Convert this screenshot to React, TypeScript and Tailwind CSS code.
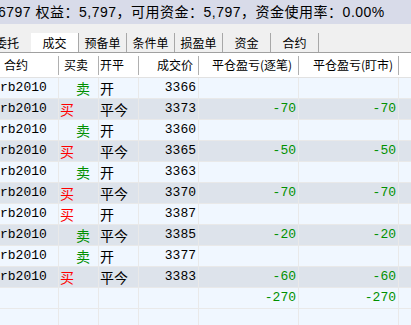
import React from 'react';

type Trade = {
  side: '买' | '卖';
  action: '开' | '平今';
  price: number;
  pnl?: number;
};

const trades: Trade[] = [
  { side: '卖', action: '开', price: 3366 },
  { side: '买', action: '平今', price: 3373, pnl: -70 },
  { side: '卖', action: '开', price: 3360 },
  { side: '买', action: '平今', price: 3365, pnl: -50 },
  { side: '卖', action: '开', price: 3363 },
  { side: '买', action: '平今', price: 3370, pnl: -70 },
  { side: '买', action: '开', price: 3387 },
  { side: '卖', action: '平今', price: 3385, pnl: -20 },
  { side: '卖', action: '开', price: 3377 },
  { side: '买', action: '平今', price: 3383, pnl: -60 },
];

const tabs = ['委托', '成交', '预备单', '条件单', '损盈单', '资金', '合约'];

const cjk = '"Noto Sans CJK SC", sans-serif';
const mono = '"Liberation Mono", "Noto Sans CJK SC", monospace';

const cols = 'grid grid-cols-[59px_40px_40px_60px_100px_100px_1fr]';
const cell = 'border-r border-[#e9e9e9] flex items-center overflow-hidden whitespace-nowrap';

const HeaderCell: React.FC<{ label?: string; align?: 'left' | 'right'; pad?: string }> = ({ label, align = 'left', pad = '' }) => (
  <div className="flex items-center h-full">
    <div className={`flex-1 ${align === 'right' ? 'text-right' : 'text-left'} ${pad}`}>{label}</div>
    <div className="w-px h-[19px] bg-[#b0b0b0]" />
  </div>
);

export default function App() {
  return (
    <div className="w-[411px] h-[325px] overflow-hidden bg-[#f0f0f0] text-black" style={{ fontFamily: cjk }}>
      {/* account summary */}
      <div className="h-[24px] bg-[#d8dbe9] flex items-center text-[14px] tracking-[0.5px] whitespace-nowrap" style={{ fontFamily: '"Liberation Sans", "Noto Sans CJK SC", sans-serif' }}>
        <span className="-ml-[2px]">6797 权益：5,797，可用资金：5,797，资金使用率：0.00%</span>
      </div>

      {/* tabs */}
      <div className="h-[29px] flex items-end border-b border-[#a0a0a0] overflow-hidden">
        <div className="flex -ml-[17px] text-[12px] h-[19px]">
          {tabs.map((t, i) => (
            <div
              key={t}
              className={`w-[48px] flex items-center justify-center ${i === 1 ? 'bg-white' : ''} ${i > 0 ? 'border-r border-[#a8a8a8]' : ''}`}
            >
              {t}
            </div>
          ))}
        </div>
      </div>

      {/* column headers */}
      <div className={`${cols} h-[25px] bg-white border-b border-[#e2e2e2] text-[12px]`}>
        <HeaderCell label="合约" pad="pl-[4px]" />
        <HeaderCell label="买卖" pad="pl-[5px]" />
        <HeaderCell label="开平" pad="pl-[1px]" />
        <HeaderCell label="成交价" align="right" pad="pr-[5px]" />
        <HeaderCell label="平仓盈亏(逐笔)" align="right" pad="pr-[6px]" />
        <HeaderCell label="平仓盈亏(盯市)" align="right" pad="pr-[5px]" />
        <div />
      </div>

      {/* trades */}
      {trades.map((t, i) => (
        <div
          key={i}
          className={`${cols} h-[21px] border-b border-[#e9e9e9] text-[13px] ${i % 2 === 0 ? 'bg-[#f0f7ff]' : 'bg-[#dde3eb]'}`}
          style={{ fontFamily: mono }}
        >
          <div className={cell}>rb2010</div>
          <div className={cell}>
            {t.side === '买' ? (
              <span className="pl-[1px] text-[14px] text-[#ff0000]" style={{ fontFamily: cjk }}>买</span>
            ) : (
              <span className="pl-[17px] text-[14px] text-[#009000]" style={{ fontFamily: cjk }}>卖</span>
            )}
          </div>
          <div className={cell}>
            <span className="pl-[1px] text-[14px]" style={{ fontFamily: cjk }}>{t.action}</span>
          </div>
          <div className={`${cell} justify-end pr-[2px]`}>{t.price}</div>
          <div className={`${cell} justify-end pr-[2px] text-[#009000]`}>{t.pnl ?? ''}</div>
          <div className={`${cell} justify-end pr-[2px] text-[#009000]`}>{t.pnl ?? ''}</div>
          <div />
        </div>
      ))}

      {/* totals */}
      <div className={`${cols} h-[21px] border-b border-[#e9e9e9] text-[13px] bg-[#f0f7ff]`} style={{ fontFamily: mono }}>
        <div className={cell} />
        <div className={cell} />
        <div className={cell} />
        <div className={cell} />
        <div className={`${cell} justify-end pr-[2px] text-[#009000]`}>-270</div>
        <div className={`${cell} justify-end pr-[2px] text-[#009000]`}>-270</div>
        <div />
      </div>

      {/* empty filler row */}
      <div className={`${cols} h-[21px] bg-[#f0f7ff]`}>
        <div className={cell} />
        <div className={cell} />
        <div className={cell} />
        <div className={cell} />
        <div className={cell} />
        <div className={cell} />
        <div />
      </div>
    </div>
  );
}
